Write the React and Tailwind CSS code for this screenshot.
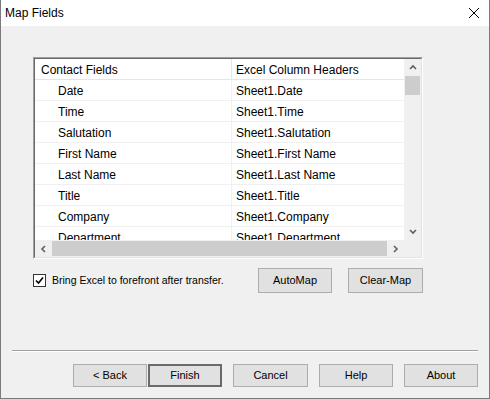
import React from 'react';

const fields = [
  ['Date', 'Sheet1.Date'],
  ['Time', 'Sheet1.Time'],
  ['Salutation', 'Sheet1.Salutation'],
  ['First Name', 'Sheet1.First Name'],
  ['Last Name', 'Sheet1.Last Name'],
  ['Title', 'Sheet1.Title'],
  ['Company', 'Sheet1.Company'],
  ['Department', 'Sheet1.Department'],
];

const Chevron = ({ dir }) => {
  const paths = {
    up: 'M1 5 L4 2 L7 5',
    down: 'M1 2 L4 5 L7 2',
    left: 'M5 1 L2 4 L5 7',
    right: 'M2 1 L5 4 L2 7',
  };
  return (
    <svg width="8" height="8" viewBox="0 0 8 8">
      <path d={paths[dir]} fill="none" stroke="#606060" strokeWidth="1.6" />
    </svg>
  );
};

// size classes passed in so widths don't collide
const Button = ({ children, primary, size = 'h-[23px] w-[75px]', className = '' }) => (
  <button
    className={`${size} bg-[#e1e1e1] text-[11px] text-black ${
      primary ? 'border-2 border-[#6a6a6a]' : 'border border-[#adadad]'
    } ${className}`}
  >
    {children}
  </button>
);

const App = () => {
  return (
    <div
      className="w-[490px] h-[399px] bg-[#f0f0f0] flex flex-col border-x border-b border-[#7a7a7a] text-black"
      style={{ fontFamily: '"Liberation Sans", Arial, sans-serif' }}
    >
      <div className="h-[26px] bg-white flex items-center justify-between pl-[4px] pr-[9px] shrink-0">
        <span className="text-[12px]">Map Fields</span>
        <svg width="12" height="12" viewBox="0 0 12 12">
          <path d="M1 1 L11 11 M11 1 L1 11" stroke="#000" strokeWidth="1" />
        </svg>
      </div>

      <div className="flex-1 flex flex-col pt-[31px]">
        <div className="ml-[32px] w-[390px] h-[202px] border-t border-l border-[#a0a0a0] border-b border-r border-b-white border-r-white">
          <div className="h-full border border-t-[#696969] border-l-[#696969] border-b-[#e3e3e3] border-r-[#e3e3e3] bg-white flex flex-col">
            <div className="flex flex-1 min-h-0">
              <div className="flex-1 overflow-hidden text-[12px]">
                <div className="flex h-[21px] border-b border-[#e5e5e5]">
                  <div className="w-[197px] border-r border-[#e5e5e5] pl-[6px] pt-[1px] flex items-center">Contact Fields</div>
                  <div className="flex-1 pl-[4px] pt-[1px] flex items-center">Excel Column Headers</div>
                </div>
                {fields.map(([a, b]) => (
                  <div key={a} className="flex h-[21px] border-b border-[#f0f0f0]">
                    <div className="w-[197px] border-r border-[#f0f0f0] pl-[23px] pt-[1px] flex items-center whitespace-nowrap">{a}</div>
                    <div className="flex-1 pl-[4px] pt-[1px] flex items-center whitespace-nowrap">{b}</div>
                  </div>
                ))}
              </div>
              <div className="w-[17px] bg-[#f0f0f0] flex flex-col">
                <div className="h-[17px] flex items-center justify-center">
                  <Chevron dir="up" />
                </div>
                <div className="flex-1 px-[1px]">
                  <div className="h-[19px] bg-[#cdcdcd]" />
                </div>
                <div className="h-[17px] flex items-center justify-center">
                  <Chevron dir="down" />
                </div>
              </div>
            </div>
            <div className="flex h-[17px] bg-[#f0f0f0] shrink-0">
              <div className="w-[17px] flex items-center justify-center">
                <Chevron dir="left" />
              </div>
              <div className="flex-1 py-[1px]">
                <div className="h-full w-full bg-[#cdcdcd]" />
              </div>
              <div className="w-[17px] flex items-center justify-center">
                <Chevron dir="right" />
              </div>
              <div className="w-[17px]" />
            </div>
          </div>
        </div>

        <div className="flex items-center mt-[9px] ml-[32px] w-[390px]">
          <div className="w-[13px] h-[13px] bg-white border border-[#333] flex items-center justify-center">
            <svg width="9" height="9" viewBox="0 0 9 9">
              <path d="M1 4.5 L3.5 7 L8 1.5" fill="none" stroke="#000" strokeWidth="1.6" />
            </svg>
          </div>
          <span className="ml-[6px] text-[10.5px]">Bring Excel to forefront after transfer.</span>
          <div className="flex-1" />
          <Button size="h-[25px] w-[74px]">AutoMap</Button>
          <Button size="h-[25px] w-[75px]" className="ml-[16px]">Clear-Map</Button>
        </div>

        <div className="flex-1" />

        <div className="mx-[11px] h-[2px] border-t border-[#a0a0a0] border-b border-b-white" />

        <div className="flex justify-end pr-[11px] pt-[12px] pb-[11px]">
          <Button size="h-[23px] w-[74px]">&lt; Back</Button>
          <Button size="h-[23px] w-[74px]" primary className="ml-[1px]">Finish</Button>
          <Button size="h-[23px] w-[75px]" className="ml-[11px]">Cancel</Button>
          <Button size="h-[23px] w-[74px]" className="ml-[11px]">Help</Button>
          <Button size="h-[23px] w-[74px]" className="ml-[11px]">About</Button>
        </div>
      </div>
    </div>
  );
};

export default App;
